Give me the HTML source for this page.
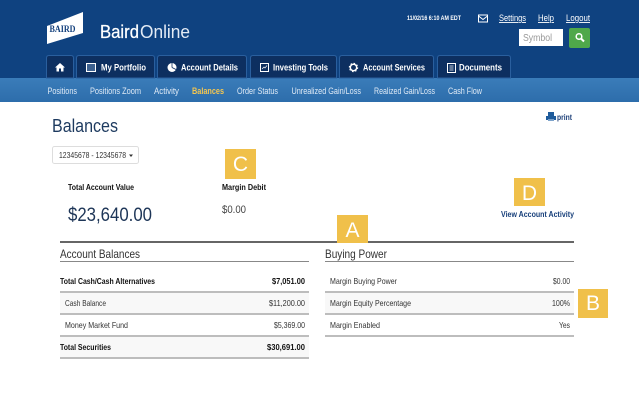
<!DOCTYPE html>
<html><head><meta charset="utf-8">
<style>
html,body{margin:0;padding:0;background:#fff}
#p{position:relative;width:639px;height:420px;overflow:hidden;background:#fff;filter:blur(.3px)}
svg{position:absolute;left:0;top:0}
text{font-family:"Liberation Sans",sans-serif;white-space:pre}
.tl{fill:#fff;font-weight:bold;font-size:9.5px}
.sn{fill:#dfeaf6;font-size:9px}
.top{fill:#fff;font-size:9px;text-decoration:underline}
.r{font-size:8.5px;fill:#333}
.b{font-size:8.5px;font-weight:bold;fill:#111}
.k{fill:#fff;font-size:21px;text-anchor:middle}
.tab{fill:#0d2f60;stroke:#2a5f9e}
</style></head><body><div id="p">
<svg width="639" height="420" viewBox="0 0 639 420">
<defs><linearGradient id="g" x1="0" y1="0" x2="0" y2="1"><stop offset="0" stop-color="#3a7cb9"/><stop offset="1" stop-color="#2d6dab"/></linearGradient></defs>
<rect width="639" height="78" fill="#0f4280"/>
<rect y="78" width="639" height="24" fill="url(#g)"/>

<polygon points="47,26 83,12 83,33 47,44" fill="#fff"/>
<text x="49.500" y="32" font-size="9.500" font-weight="bold" style="font-family:'Liberation Serif',serif" fill="#123f7c" textLength="26" lengthAdjust="spacingAndGlyphs">BAIRD</text>
<text x="100" y="38" font-size="18.500" fill="#fff" stroke="#fff" stroke-width=".25" textLength="39" lengthAdjust="spacingAndGlyphs">Baird</text>
<text x="140" y="38" font-size="18.500" fill="#e3ebf5" textLength="50" lengthAdjust="spacingAndGlyphs">Online</text>

<text x="407" y="20" font-size="6" font-weight="bold" fill="#fff" textLength="54" lengthAdjust="spacingAndGlyphs">11/02/16 6:10 AM EDT</text>
<rect x="478.500" y="15" width="9" height="7" fill="none" stroke="#fff"/><path d="M478.500 16L483 19.500L487.500 16" fill="none" stroke="#fff"/>
<text class="top" x="499" y="21" textLength="27" lengthAdjust="spacingAndGlyphs">Settings</text>
<text class="top" x="538" y="21" textLength="16" lengthAdjust="spacingAndGlyphs">Help</text>
<text class="top" x="566" y="21" textLength="24" lengthAdjust="spacingAndGlyphs">Logout</text>
<rect x="519" y="29" width="44" height="17" fill="#fff"/>
<text x="523" y="41" font-size="10.500" fill="#999" textLength="29" lengthAdjust="spacingAndGlyphs">Symbol</text>
<rect x="569" y="28" width="21" height="20" rx="2" fill="#4fa84a"/>
<circle cx="579" cy="36.500" r="2.800" fill="none" stroke="#fff" stroke-width="1.500"/><path d="M581 38.500L584 41.500" stroke="#fff" stroke-width="2"/>

<path class="tab" d="M46.500 78V58Q46.500 55.500 49 55.500H71Q73.500 55.500 73.500 58V78Z"/>
<path class="tab" d="M76.500 78V58Q76.500 55.500 79 55.500H152Q154.500 55.500 154.500 58V78Z"/>
<path class="tab" d="M157.500 78V58Q157.500 55.500 160 55.500H244Q246.500 55.500 246.500 58V78Z"/>
<path class="tab" d="M250.500 78V58Q250.500 55.500 253 55.500H334Q336.500 55.500 336.500 58V78Z"/>
<path class="tab" d="M339.500 78V58Q339.500 55.500 342 55.500H431Q433.500 55.500 433.500 58V78Z"/>
<path class="tab" d="M437.500 78V58Q437.500 55.500 440 55.500H508Q510.500 55.500 510.500 58V78Z"/>

<path d="M60 63L65 67.500H63.500V71.500H61V68.500H59V71.500H56.500V67.500H55Z" fill="#fff"/>
<rect x="86.500" y="63.500" width="9" height="8" fill="#3d6190" stroke="#fff"/>
<circle cx="172" cy="67.500" r="4.500" fill="#fff"/><path d="M172 67.500V63M172 67.500L176 69.500" stroke="#0d2f60" stroke-width=".8"/>
<rect x="260.500" y="63.500" width="8" height="8" fill="none" stroke="#fff"/><path d="M262 69L264 67L265 68L267 65.500" fill="none" stroke="#fff" stroke-width=".7"/>
<circle cx="353.500" cy="67.500" r="3.200" fill="none" stroke="#fff" stroke-width="1.500"/>
<circle cx="353.500" cy="67.500" r="4.200" fill="none" stroke="#fff" stroke-width="1" stroke-dasharray="1.500 1.800"/>
<rect x="447.500" y="63.500" width="8" height="9" fill="none" stroke="#fff"/><path d="M449.500 66H453.500M449.500 68H453.500M449.500 70H453.500" stroke="#fff" stroke-width=".7"/>

<text class="tl" x="101" y="70.500" textLength="45" lengthAdjust="spacingAndGlyphs">My Portfolio</text>
<text class="tl" x="181" y="70.500" textLength="57" lengthAdjust="spacingAndGlyphs">Account Details</text>
<text class="tl" x="273" y="70.500" textLength="55" lengthAdjust="spacingAndGlyphs">Investing Tools</text>
<text class="tl" x="363" y="70.500" textLength="62" lengthAdjust="spacingAndGlyphs">Account Services</text>
<text class="tl" x="459" y="70.500" textLength="43" lengthAdjust="spacingAndGlyphs">Documents</text>

<text class="sn" x="47.500" y="94" textLength="29.500" lengthAdjust="spacingAndGlyphs">Positions</text>
<text class="sn" x="90" y="94" textLength="51" lengthAdjust="spacingAndGlyphs">Positions Zoom</text>
<text class="sn" x="154" y="94" textLength="25" lengthAdjust="spacingAndGlyphs">Activity</text>
<text class="sn" x="192" y="94" textLength="32" lengthAdjust="spacingAndGlyphs" style="fill:#f5c64f;font-weight:bold">Balances</text>
<text class="sn" x="237" y="94" textLength="41" lengthAdjust="spacingAndGlyphs">Order Status</text>
<text class="sn" x="291.500" y="94" textLength="69.500" lengthAdjust="spacingAndGlyphs">Unrealized Gain/Loss</text>
<text class="sn" x="374" y="94" textLength="61" lengthAdjust="spacingAndGlyphs">Realized Gain/Loss</text>
<text class="sn" x="448" y="94" textLength="34" lengthAdjust="spacingAndGlyphs">Cash Flow</text>

<text x="52" y="132" font-size="18.500" fill="#1d3a5f" textLength="66" lengthAdjust="spacingAndGlyphs">Balances</text>
<rect x="546" y="116" width="10" height="4" fill="#1f5c9c"/><rect x="548" y="112" width="6" height="4" fill="#1f5c9c"/><rect x="548" y="119" width="6" height="2" fill="#7da3cb"/>
<text x="557" y="120" font-size="8" font-weight="bold" fill="#1c3f78" textLength="15" lengthAdjust="spacingAndGlyphs">print</text>

<rect x="52.500" y="146.500" width="86" height="17" rx="2" fill="#fff" stroke="#ddd"/>
<text x="59" y="158" font-size="8" fill="#333" textLength="67" lengthAdjust="spacingAndGlyphs">12345678 - 12345678</text>
<path d="M129 154.500H133L131 157Z" fill="#333"/>

<text class="b" x="68" y="190" textLength="66" lengthAdjust="spacingAndGlyphs">Total Account Value</text>
<text x="68" y="221" font-size="19" fill="#1d3557" textLength="84" lengthAdjust="spacingAndGlyphs">$23,640.00</text>
<text class="b" x="222" y="190" textLength="44" lengthAdjust="spacingAndGlyphs">Margin Debit</text>
<text x="222" y="213" font-size="11" fill="#444" textLength="24" lengthAdjust="spacingAndGlyphs">$0.00</text>
<text x="501" y="217" font-size="8.500" font-weight="bold" fill="#173f7a" textLength="73" lengthAdjust="spacingAndGlyphs">View Account Activity</text>

<rect x="60" y="241" width="514" height="2" fill="#666"/>
<rect x="225" y="149" width="31" height="30" fill="#f0c04a"/><text class="k" x="240.500" y="171">C</text>
<rect x="514" y="178" width="31" height="28" fill="#f0c04a"/><text class="k" x="529.500" y="200">D</text>
<rect x="337" y="215" width="31" height="28" fill="#f0c04a"/><text class="k" x="352.500" y="237">A</text>
<rect x="578" y="289" width="30" height="29" fill="#f0c04a"/><text class="k" x="593" y="310">B</text>

<text x="60" y="258" font-size="12" fill="#333" textLength="80" lengthAdjust="spacingAndGlyphs">Account Balances</text>
<rect x="60" y="261" width="249" height="1" fill="#888"/>
<text x="325" y="258" font-size="12" fill="#333" textLength="62" lengthAdjust="spacingAndGlyphs">Buying Power</text>
<rect x="325" y="261" width="249" height="1" fill="#888"/>

<rect x="60" y="293" width="249" height="20" fill="#f8f8f8"/>
<rect x="60" y="337" width="249" height="20" fill="#f8f8f8"/>
<rect x="325" y="293" width="249" height="20" fill="#f8f8f8"/>
<path d="M60 292H309M60 314H309M60 336H309M60 358H309M325 292H574M325 314H574M325 336H574" stroke="#bdbdbd" stroke-width="2"/>

<text class="b" x="60" y="284" textLength="95" lengthAdjust="spacingAndGlyphs">Total Cash/Cash Alternatives</text>
<text class="b" x="272" y="284" textLength="33" lengthAdjust="spacingAndGlyphs">$7,051.00</text>
<text class="r" x="65" y="306" textLength="41" lengthAdjust="spacingAndGlyphs">Cash Balance</text>
<text class="r" x="269" y="306" textLength="36" lengthAdjust="spacingAndGlyphs">$11,200.00</text>
<text class="r" x="65" y="328" textLength="63" lengthAdjust="spacingAndGlyphs">Money Market Fund</text>
<text class="r" x="274" y="328" textLength="31" lengthAdjust="spacingAndGlyphs">$5,369.00</text>
<text class="b" x="60" y="350" textLength="51" lengthAdjust="spacingAndGlyphs">Total Securities</text>
<text class="b" x="267" y="350" textLength="38" lengthAdjust="spacingAndGlyphs">$30,691.00</text>

<text class="r" x="330" y="284" textLength="67" lengthAdjust="spacingAndGlyphs">Margin Buying Power</text>
<text class="r" x="553" y="284" textLength="17" lengthAdjust="spacingAndGlyphs">$0.00</text>
<text class="r" x="330" y="306" textLength="81" lengthAdjust="spacingAndGlyphs">Margin Equity Percentage</text>
<text class="r" x="552" y="306" textLength="18" lengthAdjust="spacingAndGlyphs">100%</text>
<text class="r" x="330" y="328" textLength="50" lengthAdjust="spacingAndGlyphs">Margin Enabled</text>
<text class="r" x="559" y="328" textLength="11" lengthAdjust="spacingAndGlyphs">Yes</text>
</svg>
</div></body></html>
